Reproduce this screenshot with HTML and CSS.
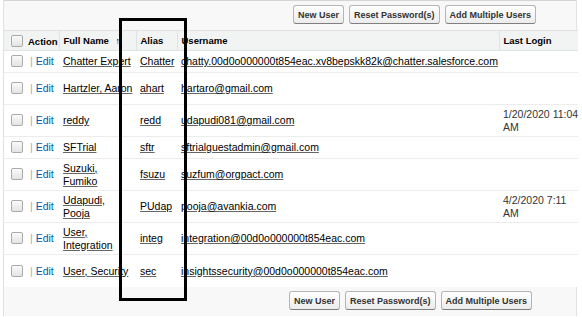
FILE: index.html
```html
<!DOCTYPE html>
<html lang="en">
<head>
    <meta charset="UTF-8">
    <title>Users</title>
    <link rel="stylesheet" href="styles.css">
</head>
<body>
    <div class="panel">
        <div class="btn-bar top">
            <button class="btn">New User</button>
            <button class="btn">Reset Password(s)</button>
            <button class="btn">Add Multiple Users</button>
        </div>

        <table class="list">
            <colgroup>
                <col class="c-action">
                <col class="c-name">
                <col class="c-alias">
                <col class="c-user">
                <col class="c-login">
            </colgroup>
            <tr class="head">
                <th class="first"><span class="cb"></span>Action</th>
                <th>Full Name <span class="sort">&#8593;</span></th>
                <th>Alias</th>
                <th>Username</th>
                <th>Last Login</th>
            </tr>
            <tr class="short">
                <td class="first"><span class="cb"></span><span class="sep">|</span> <a class="edit">Edit</a></td>
                <td><a>Chatter Expert</a></td>
                <td><a>Chatter</a></td>
                <td><a>chatty.00d0o000000t854eac.xv8bepskk82k@chatter.salesforce.com</a></td>
                <td></td>
            </tr>
            <tr>
                <td class="first"><span class="cb"></span><span class="sep">|</span> <a class="edit">Edit</a></td>
                <td><a>Hartzler, Aaron</a></td>
                <td><a>ahart</a></td>
                <td><a>hartaro@gmail.com</a></td>
                <td></td>
            </tr>
            <tr>
                <td class="first"><span class="cb"></span><span class="sep">|</span> <a class="edit">Edit</a></td>
                <td><a>reddy</a></td>
                <td><a>redd</a></td>
                <td><a>udapudi081@gmail.com</a></td>
                <td>1/20/2020 11:04<br>AM</td>
            </tr>
            <tr class="short">
                <td class="first"><span class="cb"></span><span class="sep">|</span> <a class="edit">Edit</a></td>
                <td><a>SFTrial</a></td>
                <td><a>sftr</a></td>
                <td><a>sftrialguestadmin@gmail.com</a></td>
                <td></td>
            </tr>
            <tr>
                <td class="first"><span class="cb"></span><span class="sep">|</span> <a class="edit">Edit</a></td>
                <td><a>Suzuki,<br>Fumiko</a></td>
                <td><a>fsuzu</a></td>
                <td><a>suzfum@orgpact.com</a></td>
                <td></td>
            </tr>
            <tr>
                <td class="first"><span class="cb"></span><span class="sep">|</span> <a class="edit">Edit</a></td>
                <td><a>Udapudi,<br>Pooja</a></td>
                <td><a>PUdap</a></td>
                <td><a>pooja@avankia.com</a></td>
                <td>4/2/2020 7:11<br>AM</td>
            </tr>
            <tr>
                <td class="first"><span class="cb"></span><span class="sep">|</span> <a class="edit">Edit</a></td>
                <td><a>User,<br>Integration</a></td>
                <td><a>integ</a></td>
                <td><a>integration@00d0o000000t854eac.com</a></td>
                <td></td>
            </tr>
            <tr class="last">
                <td class="first"><span class="cb"></span><span class="sep">|</span> <a class="edit">Edit</a></td>
                <td><a>User, Security</a></td>
                <td><a>sec</a></td>
                <td><a>insightssecurity@00d0o000000t854eac.com</a></td>
                <td></td>
            </tr>
        </table>

        <div class="btn-bar bottom">
            <button class="btn">New User</button>
            <button class="btn">Reset Password(s)</button>
            <button class="btn">Add Multiple Users</button>
        </div>
    </div>

    <div class="highlight"></div>
</body>
</html>
```

FILE: styles.css
```css
body { margin: 0; background: #fff; font-family: "Liberation Sans", Arial, sans-serif; font-size: 10.5px; color: #333; }

.panel { width: 574px; margin-left: 3px; background: #f8f8f8; border-top: 1px solid #d4d4d4; border-left: 1px solid #e2e2e2; border-right: 1px solid #e2e2e2; height: 316px; box-sizing: border-box; }

.btn-bar { display: flex; gap: 5px; }
.btn-bar.top { padding: 4px 0 0 289px; height: 25px; }
.btn-bar.bottom { padding: 4px 0 0 285px; }
.btn { height: 19px; padding: 0 4px; font-family: "Liberation Sans", Arial, sans-serif; font-size: 9px; font-weight: bold; color: #333; background: linear-gradient(#fff, #ececec); border: 1px solid #b5b5b5; border-bottom-color: #7f7f7f; border-radius: 3px; }

.list { width: 100%; border-collapse: collapse; background: #fff; table-layout: fixed; }
.c-action { width: 55px; }
.c-name { width: 77px; }
.c-alias { width: 41px; }
.c-user { width: 322px; }
.c-login { width: 79px; }

.list th { height: 19px; background: #f2f3f3; border-top: 1px solid #e0e3e5; border-bottom: 1px solid #e0e3e5; border-left: 1px solid #e0e3e5; text-align: left; font-size: 9.5px; font-weight: bold; color: #000; padding: 0 0 0 4px; white-space: nowrap; }
.list th.first { border-left: 0; padding-left: 7px; }
.list td { height: 31px; padding: 0 0 0 4px; border-bottom: 1px solid #ececec; vertical-align: middle; line-height: 13px; white-space: nowrap; }
.list tr.short td { height: 21px; }
.list tr.last td { height: 32px; border-bottom: 0; }
.list td.first { padding-left: 7px; }

.list a { color: #000; text-decoration: underline; text-decoration-color: #666; }
.list a.edit { color: #015ba7; text-decoration: none; }
.sep { color: #aaa; margin-left: 2px; }
.sort { font-size: 9px; margin-left: 4px; }

.cb { display: inline-block; width: 10px; height: 10px; border: 1px solid #aaa; border-radius: 2px; background: linear-gradient(#fafafa, #e4e4e4); vertical-align: -2px; margin-right: 5px; }

.highlight { position: absolute; left: 119px; top: 18px; width: 68px; height: 283px; box-sizing: border-box; border: 3px solid #000; }
```
